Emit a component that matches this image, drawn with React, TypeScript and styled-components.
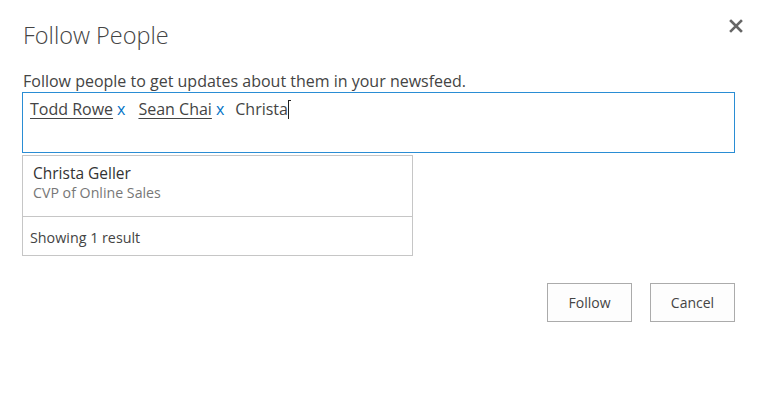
import styled, { createGlobalStyle } from "styled-components";

const GlobalStyle = createGlobalStyle`
  html, body {
    margin: 0;
    padding: 0;
    background: #ffffff;
  }
  body {
    font-family: "Open Sans", "Noto Sans", "Liberation Sans", sans-serif;
    color: #444444;
  }
`;

const Dialog = styled.div`
  position: relative;
  width: 763px;
  height: 417px;
  box-sizing: border-box;
  padding: 18px 28px 0 22px;
  background: #ffffff;
`;

const Title = styled.h1`
  margin: 0 0 0 1px;
  font-size: 23.5px;
  font-weight: 300;
  line-height: 34px;
  color: #444444;
`;

const CloseButton = styled.button`
  position: absolute;
  top: 17px;
  right: 18px;
  width: 18px;
  height: 18px;
  padding: 0;
  border: none;
  background: transparent;
  cursor: pointer;
  display: flex;
  align-items: center;
  justify-content: center;
`;

const Description = styled.p`
  margin: 19px 0 0 1px;
  font-size: 16px;
  line-height: 20px;
  color: #444444;
`;

const PickerBox = styled.div`
  margin-top: 1px;
  height: 61px;
  box-sizing: border-box;
  border: 1px solid #2a8dd4;
  padding: 5px 0 0 7px;
  display: flex;
  align-items: flex-start;
  font-size: 16px;
  line-height: 22px;
`;

const Token = styled.span`
  color: #444444;
  text-decoration: underline;
  text-underline-offset: 3px;
  text-decoration-thickness: 1px;
`;

const Remove = styled.span<{ $last?: boolean }>`
  color: #0072c6;
  margin: 0 ${(p) => (p.$last ? 11 : 13)}px 0 4px;
  cursor: pointer;
`;

const Typed = styled.span`
  color: #444444;
`;

const Caret = styled.span`
  display: inline-block;
  width: 1px;
  height: 19px;
  margin: 2px 0 0 0;
  background: #222222;
  position: relative;

  &::after {
    content: "";
    position: absolute;
    top: 0;
    left: 0;
    width: 3px;
    height: 1px;
    background: #222222;
  }
`;

const Suggestions = styled.div`
  margin-top: 2px;
  width: 391px;
  box-sizing: border-box;
  border: 1px solid #c6c6c6;
`;

const SuggestionItem = styled.div`
  padding: 7px 10px 14px;
  border-bottom: 1px solid #c6c6c6;
`;

const PersonName = styled.div`
  font-size: 15.5px;
  line-height: 21px;
  color: #333333;
`;

const PersonTitle = styled.div`
  font-size: 14.2px;
  line-height: 18px;
  color: #777777;
`;

const ResultCount = styled.div`
  padding: 11px 7px 8px;
  font-size: 14.3px;
  line-height: 19px;
  color: #444444;
`;

const Actions = styled.div`
  margin-top: 27px;
  display: flex;
  justify-content: flex-end;
  gap: 18px;
`;

const Button = styled.button`
  width: 85px;
  height: 39px;
  box-sizing: border-box;
  border: 1px solid #ababab;
  background: #fdfdfd;
  font-family: inherit;
  font-size: 14px;
  color: #444444;
  cursor: pointer;
`;

export default function App() {
  return (
    <>
      <GlobalStyle />
      <Dialog>
        <Title>Follow People</Title>
        <CloseButton aria-label="Close">
          <svg width="14" height="14" viewBox="0 0 14 14">
            <path
              d="M2 2 L12 12 M12 2 L2 12"
              stroke="#666666"
              strokeWidth="2.6"
              strokeLinecap="square"
            />
          </svg>
        </CloseButton>
        <Description>
          Follow people to get updates about them in your newsfeed.
        </Description>
        <PickerBox>
          <Token>Todd Rowe</Token>
          <Remove>x</Remove>
          <Token>Sean Chai</Token>
          <Remove $last>x</Remove>
          <Typed>Christa</Typed>
          <Caret />
        </PickerBox>
        <Suggestions>
          <SuggestionItem>
            <PersonName>Christa Geller</PersonName>
            <PersonTitle>CVP of Online Sales</PersonTitle>
          </SuggestionItem>
          <ResultCount>Showing 1 result</ResultCount>
        </Suggestions>
        <Actions>
          <Button>Follow</Button>
          <Button>Cancel</Button>
        </Actions>
      </Dialog>
    </>
  );
}
